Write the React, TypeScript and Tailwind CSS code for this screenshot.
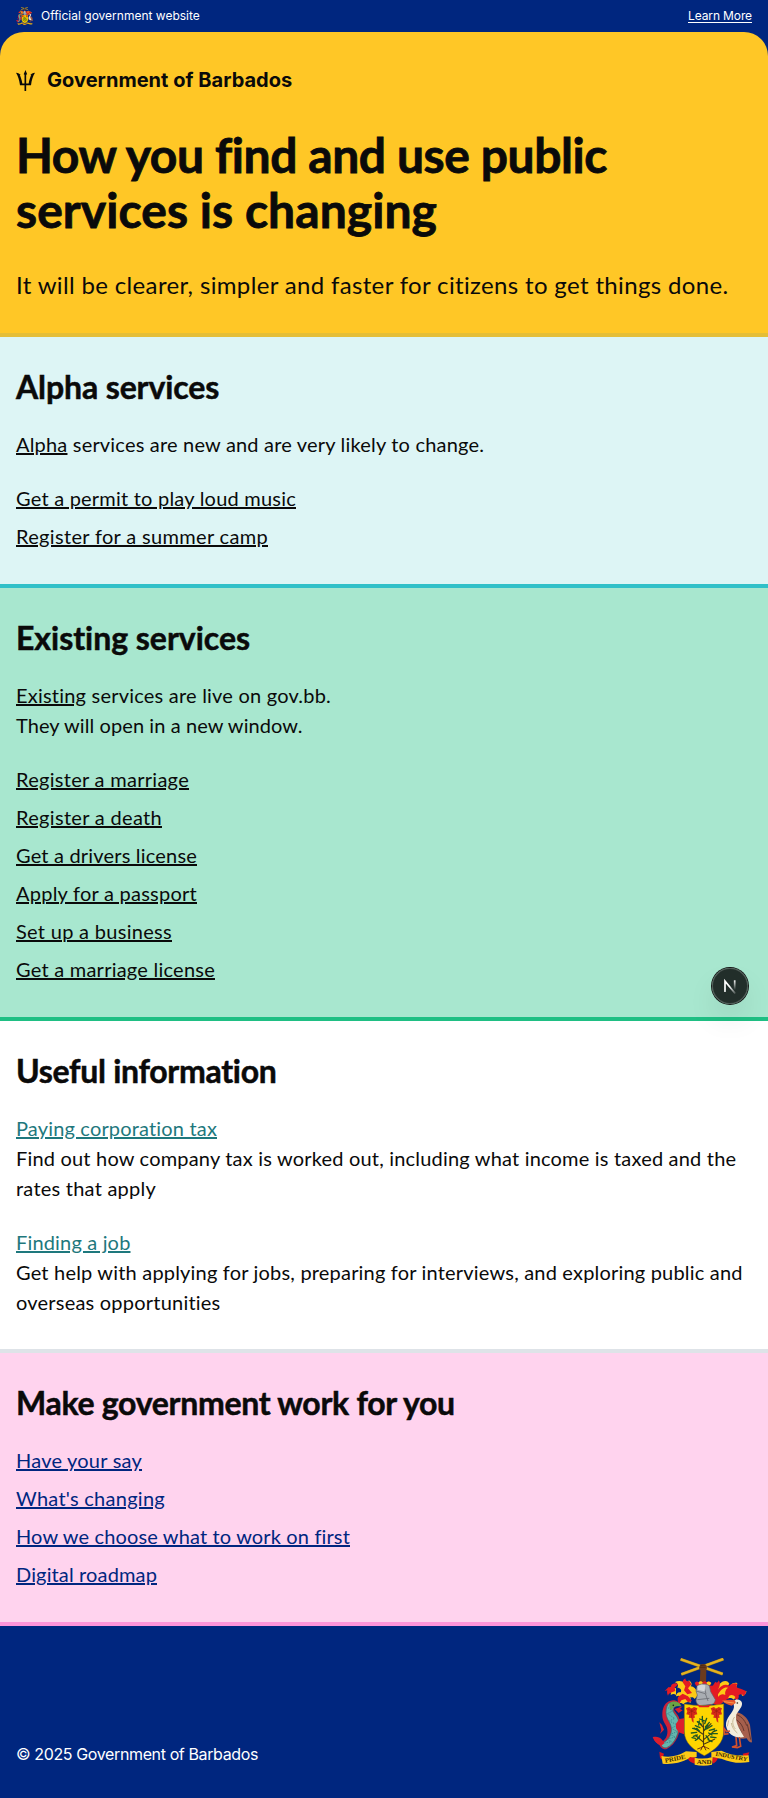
import type { ReactNode } from "react";

function Crest({ className }: { className: string }) {
  return (
    <svg viewBox="6 9 300 324" className={className} aria-hidden="true">
      {/* mantling */}
      <g fill="#fdca16">
        <path d="M146 118c-8-16-14-24-24-24 6-6 2-14-6-18 2 10-6 14-12 8-8-8-20-8-30-2 10 2 12 10 8 16 10 0 14 8 10 14-8-2-14 4-14 12 8-4 14-2 18 4 8-6 16-6 20 2 6-4 14-6 18 2z" />
        <path d="M78 100c-8-2-18 0-22 6 6 2 8 8 6 14 6-4 12-4 16 0zM100 128c-10 0-16 8-14 18 6-4 10-2 14 2 8-8 16-8 22-4v-16z" />
        <path d="M196 102c10-10 16-24 30-24 6 0 10 4 12 8l-14 20c10-6 24-8 36-2l14 12-22 4-22-6-20 16 10 12-16-2z" />
        <path d="M262 84c-8-2-14 0-20 6l-8 16 24-6zM272 104c6 4 14 8 18 4-2 8-8 16-14 14z" />
      </g>
      <g fill="#e41b23">
        <path d="M84 88c-6-6-14-4-20 2 0 6-4 8-8 6l-12 12 8-2c-2 6 0 12 2 16 2-6 6-8 12-10l10-4-2-10zM98 82c0-6 4-10 8-12 0 8 6 10 12 8l6 10-10 12 12 14-14 4-10-12 4-12zM84 126l14-10 16 8 12 14-12 4-8-10-12 4-6 10c-6-6-6-14-4-20z" />
        <path d="M186 96l10-16c4 4 8 4 10-4 6 8 4 18-2 28 10-14 22-18 34-12 6-6 16-10 26-4-6 2-6 6-2 10l12 4 14 6c0 6-2 12-8 16 0-6-8-8-14-4 2 8-2 12-6 16-6-6-12-10-20-8l-18 10-14 14-20-6-10-30z" />
        <path d="M178 92h14v24h-14z" />
      </g>
      <path d="M204 118c10-16 18-22 30-20-8 6-10 14-8 22-8-4-16-2-22 6zM238 122c6-4 14-2 18 4l-4 8c-6-6-12-6-18-4z" fill="#fdca16" />

      {/* fist and crossed cane */}
      <path d="M92 13l126 44M220 12L94 58" stroke="#a8821a" strokeWidth="9" />
      <path d="M92 13l126 44M220 12L94 58" stroke="#e4b321" strokeWidth="6.5" />
      <path d="M149 88l2-42c-7-7-3-18 7-19 11-1 16 8 11 18l-1 43z" fill="#6b3b1d" />
      <path d="M151 32l15-2M150 37h17" stroke="#43220f" strokeWidth="2" />
      <path d="M134 84q6-8 12-2 6-7 12 0 6-7 12 0 8-6 14 2l-4 8h-42z" fill="#e41b23" />
      <path d="M146 82q6-7 12 0l-2 7h-9zM170 82q8-6 14 2l-4 6h-9z" fill="#fdca16" />

      {/* helmet */}
      <path d="M142 92c8-6 26-8 36 0l4 18 14 24c-2 8-4 12-10 14l-38 4c-6-4-10-10-10-16l4-16-4-12z" fill="#a9adb2" stroke="#62656a" strokeWidth="2" />
      <path d="M138 108l28 8 8 22M142 134l36-4M160 90l8 26" stroke="#6b6e73" strokeWidth="2.5" fill="none" />
      <path d="M142 94c8-6 18-6 24-3l-2 18-20-4z" fill="#d3d5d8" />

      {/* shield */}
      <path d="M103 147q55 10 118 0v82c0 36-26 56-58 73-32-17-60-37-60-73z" fill="#fed500" stroke="#8d6d0b" strokeWidth="1.5" />
      <path d="M140 148q20 10 44 0l-8 9h-28z" fill="#e41b23" />
      <g fill="#d72a18">
        <path d="M108 160l10-4 6 5 8-5 10 4-3 8 3 10-9 2 2 8-5 1 1 14-5-4-2-10-8-1 2-8-9-2 3-9z" />
        <path d="M182 160l10-4 6 5 8-5 10 4-3 8 3 10-9 2 2 8-5 1 1 14-5-4-2-10-8-1 2-8-9-2 3-9z" />
      </g>
      <path d="M114 162l22 12M136 162l-20 12M188 162l22 12M210 162l-20 12M125 160v28M199 160v28" stroke="#8e1a0c" strokeWidth="1.5" />
      <path d="M161 276c-2-24 2-44-2-78M161 262l-26-22M161 254l34-28M159 238l-28-20M160 229l24-24M159 216l-16-16M161 268l34-16" stroke="#4b3a12" strokeWidth="3.5" fill="none" />
      <path d="M160 272c-4 6-12 8-18 10M160 272c6 6 12 6 18 10M158 274l-6 12M162 274l6 12" stroke="#6b2d12" strokeWidth="3" fill="none" />
      <g fill="none" stroke="#1c5a24" strokeWidth="4" strokeLinecap="round">
        <path d="M157 184v16M149 192l16 6M142 200l12 8M170 190l-6 16M178 202l-12 14M136 212l14 6M128 220l16 4M124 234l16-2M130 244l12-4M186 212l-16 10M194 222l-16 4M202 236l-18 0M198 248l-16-2M186 260l-12-6M136 256l12-8M126 248l10 2M148 228l-8-8M176 234l10 6M164 224l10-14M150 242l-10 12M190 230l10-4M146 210l2-12M168 242l8 10" />
      </g>

      {/* dolphin */}
      <path d="M60 138c14-6 30 2 32 16-8-4-18-2-20 6-2 12 16 16 18 40 2 34-10 66-40 82-8 4-20-4-22-14-8-2-14-8-18-18 10 0 20 2 26 10 14-8 20-26 14-44-6-14-14-18-13-42 2-20 10-32 23-36z" fill="#ce2137" />
      <path d="M58 144c14-6 28-2 34 10-12-4-22 0-23 10 0 12 14 18 17 36 4 30-10 66-36 78-12 2-18-6-16-14 22-4 36-30 28-54-6-14-14-22-14-38 0-14 4-24 10-28z" fill="#64b7ae" stroke="#2f6c72" strokeWidth="2" />
      <path d="M54 158l14 10-16 8 22 14-16 8 24 12-18 10 18 10-22 8 16 8-24 6 12 8-20 4" fill="none" stroke="#377f8b" strokeWidth="2.5" strokeDasharray="4 3" />
      <path d="M60 144c12-8 26-4 34 8l-18 2c-8 2-10 8-12 12-6-6-8-14-4-22z" fill="#6aa443" />
      <circle cx="70" cy="151" r="2.5" fill="#102010" />
      <path d="M74 162l24-8-8 8 8 4-12 8zM78 206l10-14 14-2v48l-16-6-8-12zM8 246c10-2 20-2 28 8l8 10-10 8c-10-2-20-12-26-26zM36 210l-8-8 6 24-4 10 12-12z" fill="#dc1f2e" />

      {/* pelican */}
      <path d="M252 170c24 2 42 18 48 40l6 52c-8 2-12-6-16-12-14 4-28 0-38-12z" fill="#a65f4d" />
      <path d="M256 178c16 4 28 16 34 34M258 194c12 6 20 18 24 34M258 210c8 6 14 16 18 28M292 208l10 46" stroke="#66372e" strokeWidth="3" fill="none" />
      <path d="M250 138c8-8 24-6 26 6 2 16-18 26-18 42 0 24 14 40 24 60-24 6-50-8-54-34-2-24 22-38 24-56z" fill="#f4eddc" />
      <path d="M254 186c-8 8-8 24 2 36M244 204c2 12 8 22 18 30M236 196l-4 18" stroke="#c9b995" strokeWidth="3" fill="none" />
      <path d="M217 136c14-2 26-2 38 0l2 8-12 8c-10-2-20-6-28-14z" fill="#e8552a" />
      <path d="M222 140l30 4" stroke="#f5a34d" strokeWidth="2.5" />
      <circle cx="262" cy="144" r="2.5" fill="#2a1a10" />
      <path d="M258 246l2 26-14 4 16 2 10-4-4-28M236 236l-12 2-2-18 8 10 10-2" fill="none" stroke="#d4512d" strokeWidth="5" />

      {/* motto ribbon */}
      <path d="M28 290l14 6-6 18-6-6zM278 296l20-4-6 16-8 4z" fill="#d9161e" />
      <path d="M34 303q38 8 74-14l32 2v15l-26 6q-36 18-76 14zM184 291l30-4q36 18 82 14l2 20q-42 8-84-10l-30-4z" fill="#fdca16" />
      <path d="M120 306l18 2-4 18q-16-4-20-14zM184 307l20 2q-4 12-16 17z" fill="#d9161e" />
      <path d="M134 308q26 6 54-2l-2 23q-26 6-52 0z" fill="#fdca16" />
      <g fill="#3c2a05" className="font-['Liberation_Serif'] font-bold">
        <text fontSize="19" transform="translate(46 323) rotate(-11)" textLength="62" lengthAdjust="spacingAndGlyphs">PRIDE</text>
        <text fontSize="18" x="140" y="327" textLength="44" lengthAdjust="spacingAndGlyphs">AND</text>
        <text fontSize="18" transform="translate(196 302) rotate(10)" textLength="96" lengthAdjust="spacingAndGlyphs">INDUSTRY</text>
      </g>
    </svg>
  );
}

function Trident() {
  return (
    <svg viewBox="0 0 57 63" className="h-[21px] w-[19px]" fill="#0a0a0a" aria-hidden="true">
      <path d="M28.500 0l5 13-3 1.500v26h7.500c1.500-10 5-19 8-26l-3.500 1.500c3-5 8-8 14.500-8-6 9-10 22-12 38H30.500v17h-5V46H12C10 30 6 17 0 8c6.500 0 11.500 3 14.500 8L11 14.500c3 7 6.500 16 8 26h6.500v-26l-2.500-1.500z" />
    </svg>
  );
}

function NextBadge() {
  return (
    <div className="absolute top-[968px] right-5 flex size-9 items-center justify-center rounded-full bg-black/80 shadow-[0_0_0_1px_#171717,inset_0_0_0_1px_rgba(255,255,255,0.2),0_16px_32px_-8px_rgba(0,0,0,0.24)]">
      <svg viewBox="0 0 36 36" className="size-9" fill="none" strokeWidth="1.7">
        <defs>
          <linearGradient id="nd" gradientUnits="userSpaceOnUse" x1="18" y1="18" x2="23.500" y2="25">
            <stop stopColor="#fff" />
            <stop offset="1" stopColor="#fff" stopOpacity="0.2" />
          </linearGradient>
          <linearGradient id="ns" gradientUnits="userSpaceOnUse" x1="22" y1="12" x2="22" y2="22">
            <stop stopColor="#fff" />
            <stop offset="1" stopColor="#fff" stopOpacity="0" />
          </linearGradient>
        </defs>
        <path d="M13 24V13.200L23.200 25.500" stroke="url(#nd)" />
        <path d="M22.700 12.300V22" stroke="url(#ns)" />
      </svg>
    </div>
  );
}

type Item = { text: string; tracking: string };

const alpha: Item[] = [
  { text: "Get a permit to play loud music", tracking: "tracking-[0.219px]" },
  { text: "Register for a summer camp", tracking: "tracking-[0.33px]" },
];

const existing: Item[] = [
  { text: "Register a marriage", tracking: "tracking-[0.289px]" },
  { text: "Register a death", tracking: "tracking-[0.317px]" },
  { text: "Get a drivers license", tracking: "tracking-[0.188px]" },
  { text: "Apply for a passport", tracking: "tracking-[0.244px]" },
  { text: "Set up a business", tracking: "tracking-[0.296px]" },
  { text: "Get a marriage license", tracking: "tracking-[0.237px]" },
];

const work: Item[] = [
  { text: "Have your say", tracking: "tracking-[0.224px]" },
  { text: "What's changing", tracking: "tracking-[0.266px]" },
  { text: "How we choose what to work on first", tracking: "tracking-[0.148px]" },
  { text: "Digital roadmap", tracking: "tracking-[0.139px]" },
];

const link = "underline decoration-2 underline-offset-[1px]";

function Links({ items }: { items: Item[] }) {
  return (
    <ul className="flex flex-col gap-2">
      {items.map((item) => (
        <li key={item.text}>
          <a href="#" className={`${link} ${item.tracking}`}>{item.text}</a>
        </li>
      ))}
    </ul>
  );
}

type SectionProps = { title: string; titleClass: string; className: string; children: ReactNode };

function Section({ title, titleClass, className, children }: SectionProps) {
  return (
    <section className={`flex flex-col gap-6 border-b-4 px-4 pt-8 ${className}`}>
      <h2 className={`text-[32px] leading-[1.15] font-bold [-webkit-text-stroke:0.5px] ${titleClass}`}>{title}</h2>
      {children}
    </section>
  );
}

export default function App() {
  return (
    <div className="relative w-full bg-white font-['Lato',sans-serif] text-[20px] leading-[30px] tracking-[0.19px] text-[#0a0a0a]">
      <div className="bg-[#00267f]">
        <div className="flex h-8 items-center justify-between px-4 font-['Inter',sans-serif] text-xs tracking-normal text-white">
          <div className="flex items-center gap-2">
            <Crest className="h-[18px] w-[17px]" />
            <span>Official government website</span>
          </div>
          <a href="#" className="tracking-[-0.116px] underline underline-offset-2">Learn More</a>
        </div>
        <header className="h-[305px] rounded-t-3xl border-b-4 border-[#e4be37] bg-[#ffc726] px-4 pt-9">
          <div className="flex h-6 items-center gap-3">
            <Trident />
            <span className="font-['Inter',sans-serif] text-[20px] leading-6 font-bold tracking-[0.03px]">Government of Barbados</span>
          </div>
          <h1 className="pt-[35px] text-[48px] leading-[1.15] font-bold [-webkit-text-stroke:0.8px]">
            <span className="block tracking-[-0.418px]">How you find and use public</span>
            <span className="block tracking-[0.059px]">services is changing</span>
          </h1>
          <p className="pt-[30px] text-[24px] leading-9 tracking-[0.347px] whitespace-nowrap">
            It will be clearer, simpler and faster for citizens to get things done.
          </p>
        </header>
      </div>

      <Section title="Alpha services" titleClass="-mb-px tracking-[-0.114px]" className="border-[#30c0c8] bg-[#ddf5f5] pb-[33px]">
        <p><a href="#" className={link}>Alpha</a> services are new and are very likely to change.</p>
        <Links items={alpha} />
      </Section>

      <Section title="Existing services" titleClass="-mb-px tracking-[-0.027px]" className="border-[#1fbf84] bg-[#a8e7cf] pb-[33px]">
        <p>
          <span className="tracking-[0.214px]"><a href="#" className={link}>Existing</a> services are live on gov.bb.</span>
          <br />
          <span className="tracking-[0.083px]">They will open in a new window.</span>
        </p>
        <Links items={existing} />
      </Section>

      <Section title="Useful information" titleClass="tracking-[-0.293px]" className="border-[#dee3e8] bg-white pb-8">
        <div>
          <a href="#" className={`${link} tracking-[0.168px] text-[#1e787d]`}>Paying corporation tax</a>
          <p>Find out how company tax is worked out, including what income is taxed and the <span className="tracking-[0.236px]">rates that apply</span></p>
        </div>
        <div>
          <a href="#" className={`${link} tracking-[0.168px] text-[#1e787d]`}>Finding a job</a>
          <p>Get help with applying for jobs, preparing for interviews, and exploring public and <span className="tracking-[0.219px]">overseas opportunities</span></p>
        </div>
      </Section>

      <Section title="Make government work for you" titleClass="-mb-px tracking-[-0.29px]" className="border-[#ff94d9] bg-[#ffd3ee] pb-[33px]">
        <div className="text-[#00267f]"><Links items={work} /></div>
      </Section>

      <footer className="flex h-[172px] items-end justify-between bg-[#00267f] px-4 pb-8 font-['Inter',sans-serif] text-base leading-6 tracking-[-0.378px] text-white">
        <span>© 2025 Government of Barbados</span>
        <Crest className="h-[108px] w-[100px]" />
      </footer>

      <NextBadge />
    </div>
  );
}
